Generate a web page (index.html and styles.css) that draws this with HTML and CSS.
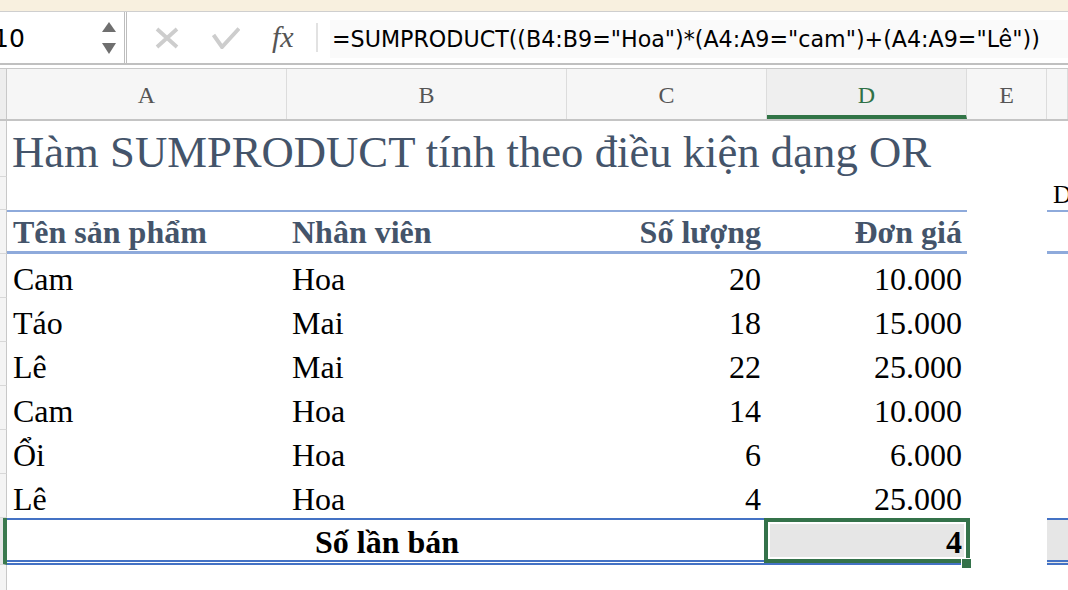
FILE: index.html
```html
<!DOCTYPE html>
<html lang="vi">
<head>
<meta charset="utf-8">
<title>SUMPRODUCT</title>
<link rel="stylesheet" href="styles.css">
</head>
<body>
<div class="topbar"></div>
<div class="fbar">
  <div class="namebox">
    <span class="nb-text">10</span>
    <svg class="stepper" width="14" height="32" viewBox="0 0 14 32"><polygon points="7,0 14,10 0,10" fill="#6f6f6f"/><polygon points="0,21 14,21 7,32" fill="#6f6f6f"/></svg>
  </div>
  <svg class="ic-x" width="24" height="22" viewBox="0 0 24 22"><path d="M2 2 L22 20 M22 2 L2 20" stroke="#cdcdcd" stroke-width="3.8" fill="none"/></svg>
  <svg class="ic-ok" width="28" height="22" viewBox="0 0 28 22"><path d="M1.5 8 L10 20 L27 1.5" stroke="#cdcdcd" stroke-width="4" fill="none"/></svg>
  <span class="fx">fx</span>
  <span class="fsep"></span>
  <div class="ftext">=SUMPRODUCT((B4:B9="Hoa")*(A4:A9="cam")+(A4:A9="Lê"))</div>
</div>
<div class="gap"></div>
<div class="colheads">
  <div class="ch ch-rh"></div>
  <div class="ch">A</div>
  <div class="ch">B</div>
  <div class="ch">C</div>
  <div class="ch ch-sel">D</div>
  <div class="ch">E</div>
  <div class="ch"></div>
</div>
<div class="sheet">
  <div class="row r-title">
    <div class="rh"></div>
    <div class="cell title">Hàm SUMPRODUCT tính theo điều kiện dạng OR</div>
    <div class="cell"></div>
    <div class="cell"></div>
  </div>
  <div class="row r-2">
    <div class="rh"></div>
    <div class="cell span5"></div>
    <div class="cell sub">D</div>
  </div>
  <div class="row r-head">
    <div class="rh"></div>
    <div class="cell hd a">Tên sản phẩm</div>
    <div class="cell hd b">Nhân viên</div>
    <div class="cell hd num">Số lượng</div>
    <div class="cell hd num">Đơn giá</div>
    <div class="cell"></div>
    <div class="cell hd"></div>
  </div>
  <div class="row r-data">
    <div class="rh"></div>
    <div class="cell a">Cam</div><div class="cell b">Hoa</div><div class="cell num">20</div><div class="cell num">10.000</div><div class="cell"></div><div class="cell"></div>
  </div>
  <div class="row r-data">
    <div class="rh"></div>
    <div class="cell a">Táo</div><div class="cell b">Mai</div><div class="cell num">18</div><div class="cell num">15.000</div><div class="cell"></div><div class="cell"></div>
  </div>
  <div class="row r-data">
    <div class="rh"></div>
    <div class="cell a">Lê</div><div class="cell b">Mai</div><div class="cell num">22</div><div class="cell num">25.000</div><div class="cell"></div><div class="cell"></div>
  </div>
  <div class="row r-data">
    <div class="rh"></div>
    <div class="cell a">Cam</div><div class="cell b">Hoa</div><div class="cell num">14</div><div class="cell num">10.000</div><div class="cell"></div><div class="cell"></div>
  </div>
  <div class="row r-data">
    <div class="rh"></div>
    <div class="cell a">Ổi</div><div class="cell b">Hoa</div><div class="cell num">6</div><div class="cell num">6.000</div><div class="cell"></div><div class="cell"></div>
  </div>
  <div class="row r-data">
    <div class="rh"></div>
    <div class="cell a">Lê</div><div class="cell b">Hoa</div><div class="cell num">4</div><div class="cell num">25.000</div><div class="cell"></div><div class="cell"></div>
  </div>
  <div class="row r-total">
    <div class="rh rh-sel"></div>
    <div class="cell tot merged">Số lần bán</div>
    <div class="cell tot num fill selcell">4<span class="selbox"></span><span class="handle"></span></div>
    <div class="cell"></div>
    <div class="cell tot fill"></div>
  </div>
  <div class="row r-last">
    <div class="rh"></div>
  </div>
</div>
</body>
</html>
```

FILE: styles.css
```css
* { box-sizing: border-box; }
html, body { margin: 0; padding: 0; }
body {
  width: 1068px;
  height: 590px;
  overflow: hidden;
  background: #ffffff;
  font-family: "Liberation Serif", "Times New Roman", serif;
  color: #000;
}

.topbar {
  height: 12px;
  background: #f8f0df;
  border-bottom: 1px solid #cfcfcf;
}

.fbar {
  height: 53px;
  display: flex;
  align-items: center;
  border-bottom: 2px solid #c0c0c0;
  background: #ffffff;
}
.namebox {
  width: 127px;
  height: 100%;
  display: flex;
  align-items: center;
  justify-content: space-between;
  border-right: 3px double #bdbdbd;
  padding-right: 8px;
  overflow: hidden;
  flex: none;
}
.nb-text {
  font-family: "DejaVu Sans", sans-serif;
  font-size: 25px;
  margin-left: -7px;
  margin-top: 2px;
}
.stepper { display: block; margin-top: 1px; }
.ic-x { margin-left: 28px; flex: none; }
.ic-ok { margin-left: 33px; flex: none; }
.fx {
  margin-left: 32px;
  font-family: "Liberation Serif", serif;
  font-style: italic;
  font-size: 30px;
  color: #555555;
  width: 29px;
  flex: none;
  margin-top: -2px;
}
.fsep {
  margin-left: 15px;
  width: 2px;
  height: 29px;
  background: #e2e2e2;
  flex: none;
}
.ftext {
  margin-left: 12px;
  font-family: "DejaVu Sans", sans-serif;
  font-size: 22.2px;
  white-space: nowrap;
  background: #fafafa;
  padding: 6px 2px;
  margin-top: 2px;
  flex: 1;
}

.gap { height: 3px; }

.colheads, .row {
  display: grid;
  grid-template-columns: 7px 280px 280px 200px 200px 80px 21px;
}
.colheads {
  height: 53px;
  border-top: 1px solid #c8c8c8;
  border-bottom: 2px solid #c4c4c4;
  background: #f6f6f6;
}
.ch {
  display: flex;
  align-items: center;
  justify-content: center;
  font-size: 24px;
  color: #555555;
  border-right: 1px solid #dcdcdc;
  padding-top: 2px;
}
.ch-rh { background: #ededed; border-right: 1px solid #c8c8c8; }
.ch-sel {
  color: #2f7146;
  background: #efefef;
  border-bottom: 4px solid #317446;
  padding-top: 6px;
}

.rh {
  background: #f4f4f4;
  border-right: 1px solid #c8c8c8;
  border-bottom: 1px solid #d8d8d8;
}
.rh-sel { border-right: 4px solid #3b7a4e; background: #e6e6e6; }

.cell {
  display: flex;
  align-items: flex-end;
  font-size: 32px;
  line-height: 30px;
  padding: 0 5px 4px 5px;
  white-space: nowrap;
  min-width: 0;
}
.cell.a { padding-left: 6px; }
.num { justify-content: flex-end; padding-right: 5px; }
.cell.num:nth-child(4) { padding-right: 6px; }

.r-title { height: 56px; }
.title {
  grid-column: 2 / span 4;
  font-size: 44.7px;
  line-height: 48px;
  color: #44546a;
  padding-bottom: 1px;
}

.r-2 { height: 33px; }
.span5 { grid-column: 2 / span 5; }
.sub {
  font-size: 26px;
  line-height: 26px;
  padding-left: 6px;
  padding-bottom: 2px;
  overflow: hidden;
}

.r-head { height: 44px; }
.hd {
  font-weight: bold;
  color: #44546a;
  border-top: 2px solid #8eaadb;
  border-bottom: 3px solid #8eaadb;
}

.r-data { height: 44px; }

.r-total { height: 47px; }
.tot {
  font-weight: bold;
  border-top: 2px solid #4472c4;
  border-bottom: 5px double #4472c4;
  padding-bottom: 3px;
}
.merged { grid-column: 2 / span 3; justify-content: center; }
.fill { background: #e6e6e6; }
.selcell { position: relative; }
.selbox {
  position: absolute;
  left: -3px;
  top: -2px;
  right: -3px;
  bottom: -3px;
  border: 4px solid #34724a;
  box-shadow: inset 0 0 0 2px #ffffff;
  pointer-events: none;
}
.handle {
  position: absolute;
  left: 194px;
  top: 38px;
  width: 11px;
  height: 11px;
  background: #34724a;
  border: 1px solid #ffffff;
}

.r-last { height: 30px; }
```
